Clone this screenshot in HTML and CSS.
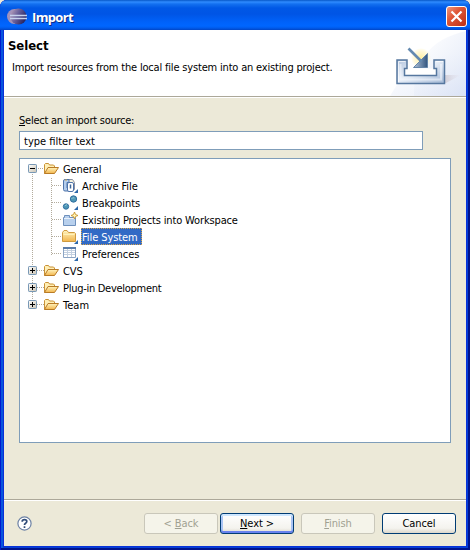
FILE: index.html
```html
<!DOCTYPE html>
<html lang="en">
<head>
<meta charset="utf-8">
<title>Import</title>
<link rel="stylesheet" href="styles.css">
</head>
<body>
<svg width="0" height="0" class="defs" aria-hidden="true">
  <defs>
    <linearGradient id="gold" x2="0" y2="1"><stop stop-color="#fff3bd"/><stop offset="1" stop-color="#f2b64d"/></linearGradient>
    <linearGradient id="box" x2="1" y2="1"><stop stop-color="#fff"/><stop offset="1" stop-color="#c9c2b1"/></linearGradient>
    <symbol id="folder" viewBox="0 0 16 16">
      <path d="M1.500 12.500V3.500l1-1h3l1 1.500h4l1 1V7" fill="#ffefb5" stroke="#c99135"/>
      <path d="M1.500 12.500L5 6.500h10.500L11.500 12.500z" fill="url(#gold)" stroke="#b97b26"/>
    </symbol>
    <symbol id="plus" viewBox="0 0 9 9"><rect x=".5" y=".5" width="8" height="8" rx=".7" fill="url(#box)" stroke="#7898b5"/><path d="M2 4.500h5M4.500 2v5" stroke="#000"/></symbol>
    <symbol id="minus" viewBox="0 0 9 9"><rect x=".5" y=".5" width="8" height="8" rx=".7" fill="url(#box)" stroke="#7898b5"/><path d="M2 4.500h5" stroke="#000"/></symbol>
  </defs>
</svg>
<div class="window">
  <div class="titlebar">
    <svg class="logo" width="20" height="17" viewBox="0 0 20 17">
      <defs><linearGradient id="orb" x2="1" y2=".5"><stop stop-color="#c0a6bd"/><stop offset=".5" stop-color="#69609b"/><stop offset="1" stop-color="#292662"/></linearGradient></defs>
      <circle cx="7.500" cy="8.500" r="7.500" fill="#a292bb"/><circle cx="11.500" cy="8.500" r="8" fill="url(#orb)"/>
      <path d="M3 7.500h17M3 10.500h17" stroke="#c8d2ed" stroke-width="1.300"/>
    </svg>
    <span class="title">Import</span>
    <svg class="close" width="21" height="21" viewBox="0 0 21 21">
      <defs><linearGradient id="red" x2="1" y2="1"><stop stop-color="#f09a80"/><stop offset=".4" stop-color="#df5737"/><stop offset="1" stop-color="#bd2d12"/></linearGradient></defs>
      <rect x=".5" y=".5" width="20" height="20" rx="2.500" fill="url(#red)" stroke="#fff"/><path d="M5.500 5.500l10 10M15.500 5.500l-10 10" stroke="#fff" stroke-width="2.200"/>
    </svg>
  </div>
  <div class="banner">
    <div class="heading">
      <h1><span>Select</span></h1>
      <p><span class="t-desc">Import resources from the local file system into an existing project.</span></p>
    </div>
    <svg class="art" width="76" height="66" viewBox="390 30 76 66">
      <defs>
        <linearGradient id="haze" x1="0" x2="1" y2="1"><stop offset=".1" stop-color="#fff"/><stop offset="1" stop-color="#d7e0f4"/></linearGradient>
        <linearGradient id="tray" x2="1" y2="1"><stop stop-color="#b4c5de"/><stop offset=".45" stop-color="#e9eff8"/><stop offset="1" stop-color="#a3b8d5"/></linearGradient>
        <linearGradient id="tip" x2="1" y2="0"><stop stop-color="#b4c5da"/><stop offset="1" stop-color="#31557f"/></linearGradient>
        <radialGradient id="glow"><stop stop-color="#fff0a0"/><stop offset=".5" stop-color="#fff6cc"/><stop offset="1" stop-color="#fff3b0" stop-opacity="0"/></radialGradient>
        <linearGradient id="shade" x2="1"><stop stop-color="#b5a8ae" stop-opacity=".6"/><stop offset="1" stop-color="#d7cbd5" stop-opacity="0"/></linearGradient>
      </defs>
      <path d="M414 96Q413 43 466 31V96z" fill="url(#haze)" opacity=".75"/>
      <path d="M390 96Q410 58 466 51V96z" fill="url(#haze)" opacity=".6"/>
      <path d="M445 75l16 0-15 8h-5z" fill="url(#shade)"/>
      <circle cx="421" cy="58" r="10" fill="url(#glow)"/>
      <path d="M404.500 68.500h32v7h-32z" fill="#fff"/>
      <path d="M397 60h10v8.500h-2.500v7h32v-7H434V60h10.500v23.500H397z" fill="url(#tray)" stroke="#56779f" stroke-width="1.500"/>
      <path d="M398.500 82V61.500h7M436 61.500h7" fill="none" stroke="#fff" opacity=".7"/>
      <path d="M400.500 64v15.500h40.500V64" fill="none" stroke="#f8faff" stroke-width="2" opacity=".55"/>
      <path d="M427.500 53.500v14h-14z" fill="url(#tip)" stroke="#6485a8"/>
      <path d="M408.500 48.500l13 13" stroke="#648ab0" stroke-width="2.600"/>
    </svg>
  </div>
  <div class="body">
    <label class="source"><span class="t-source"><u>S</u>elect an import source:</span></label>
    <div class="filter"><span class="t-filter">type filter text</span></div>
    <div class="tree">
      <svg class="guides" width="62" height="150" viewBox="20 159 62 150" aria-hidden="true">
        <path d="M32.500 174v126M51.500 178v77" stroke="#b2ab9c" stroke-dasharray="1 1"/>
        <path d="M38 168.500h6M37 270.500h7M37 287.500h7M37 304.500h7M52 185.500h9M52 202.500h9M52 219.500h9M52 236.500h9M52 253.500h9" stroke="#b2ab9c" stroke-dasharray="1 1"/>
      </svg>
      <div class="row"><svg class="toggle"><use href="#minus"/></svg><svg class="icon"><use href="#folder"/></svg><span class="name">General</span></div>
      <div class="row child">
        <svg class="icon" viewBox="0 0 16 16"><path d="M4.500 1.500h6l2 3v7h-8z" fill="#f4f1df" stroke="#8b91a0"/><path d="M1.500 3q0-1.500 1.500-1.500h4v3H5v5.500h2v3H3q-1.500 0-1.500-1.500z" fill="#b4cdec" stroke="#4f74aa"/><path d="M5.500 6q0-1.500 1.500-1.500h3q1.500 0 1.500 1.500v6q0 1.500-1.500 1.500H7q-1.500 0-1.500-1.500z" fill="#fff" stroke="#4e73aa"/><path d="M8.500 6.500v4" stroke="#416797" stroke-width="1.500"/><path d="M4 1v2" stroke="#d6aa4c"/><path d="M16 11v4h-4z" fill="#2e68aa"/></svg>
        <span class="name">Archive File</span></div>
      <div class="row child">
        <svg class="icon" viewBox="0 0 16 16"><circle cx="11.500" cy="4" r="3.200" fill="#4d96b5" stroke="#326fa0"/><circle cx="4" cy="11.500" r="2.700" fill="#4d96b5" stroke="#326fa0"/><path d="M9.500 4q1-2 3-1M3 11q1-2 2-1" stroke="#91c5d4" fill="none"/><path d="M16 11v4h-4z" fill="#2e68aa"/></svg>
        <span class="name">Breakpoints</span></div>
      <div class="row child">
        <svg class="icon" viewBox="0 0 16 16"><path d="M1.500 5.500h1v-2h5v2h6v8h-12z" fill="#b8d0ed" stroke="#6f91bd"/><path d="M2 6.500h11" stroke="#e8f1fb"/><path d="M12.500 0l1 2.500 2.500 1-2.500 1-1 2.500-1-2.500-2.500-1 2.500-1z" fill="#fff5b4" stroke="#c9942f" stroke-width=".9"/></svg>
        <span class="name t-exist">Existing Projects into Workspace</span></div>
      <div class="row child">
        <svg class="icon" viewBox="0 0 16 16"><path d="M.5 12.500v-9l1.500-2h3l1.500 2h6l1 1v8z" fill="url(#gold)" stroke="#d09b3e"/><path d="M1.500 5.500h11" stroke="#fff2b7"/><path d="M16 11v4h-4z" fill="#2e68aa"/></svg>
        <span class="name selected">File System</span></div>
      <div class="row child">
        <svg class="icon" viewBox="0 0 16 16"><path d="M1.500 1.500h12v10h-12z" fill="#fff" stroke="#8ca5c4"/><path d="M1 2h13" stroke="#5b7daa" stroke-width="2"/><path d="M2 4.500h11M2 6.500h11M2 8.500h11M5.500 3v8M9.500 3v8" stroke="#c3d0e0"/><path d="M16 11v4h-4z" fill="#2e68aa"/></svg>
        <span class="name">Preferences</span></div>
      <div class="row"><svg class="toggle"><use href="#plus"/></svg><svg class="icon"><use href="#folder"/></svg><span class="name">CVS</span></div>
      <div class="row"><svg class="toggle"><use href="#plus"/></svg><svg class="icon"><use href="#folder"/></svg><span class="name t-plug">Plug-in Development</span></div>
      <div class="row"><svg class="toggle"><use href="#plus"/></svg><svg class="icon"><use href="#folder"/></svg><span class="name t-team">Team</span></div>
    </div>
  </div>
  <div class="footer">
    <svg class="help" width="15" height="15" viewBox="0 0 15 15"><circle cx="7.500" cy="7.500" r="6.600" fill="#fff" stroke="#6d82a5" stroke-width="1.200"/><path d="M5.200 5.700q0-2 2.300-2t2.300 1.800q0 1-1.200 1.800t-1.100 1.700M7.500 10.300v1.800" fill="none" stroke="#304c78" stroke-width="1.700"/></svg>
    <button class="btn" disabled><span>&lt; <u>B</u>ack</span></button>
    <button class="btn primary"><span><u>N</u>ext &gt;</span></button>
    <button class="btn finish" disabled><span><u>F</u>inish</span></button>
    <button class="btn cancel"><span>Cancel</span></button>
  </div>
</div>
</body>
</html>
```
FILE: styles.css
```css
* { box-sizing: border-box; }
body {
  margin: 0;
  background: #ece9d8;
  font: 11px/13px "DejaVu Sans Condensed", "DejaVu Sans", sans-serif;
  font-stretch: condensed;
  color: #000;
}
.defs { position: absolute; }
svg { display: block; flex: none; }
span { white-space: nowrap; }
u { text-decoration: underline; text-decoration-thickness: 1px; text-underline-offset: 1px; }
.window {
  width: 470px;
  height: 550px;
  display: flex;
  flex-direction: column;
  padding: 0 4px 4px;
  border-radius: 7px 7px 0 0;
  background: #0831d9;
  box-shadow: inset 1px 0 #0019cf, inset -2px -2px #00138c, inset 3px 0 #0855dd, inset -3px -3px #0441d8;
}
.titlebar {
  height: 30px;
  margin: 0 -4px;
  padding: 0 7px;
  display: flex;
  align-items: center;
  flex: none;
  border-radius: 7px 7px 0 0;
  background: linear-gradient(#0758c8 0, #2f8bff 2px, #1370f0 4px, #0058e6 8px, #0055e5 14px, #0062fa 22px, #0066ff 26px, #005bec 28px, #0145c5 30px);
}
.logo { margin-top: 2px; }
.title {
  margin: 4px 0 0 5px;
  color: #fff;
  font: bold 13px/16px "Open Sans", sans-serif;
  letter-spacing: -.65px;
  text-shadow: 1px 1px #0c2b88;
}
.close { margin: 3px -4px 0 auto; }
.banner { height: 68px; display: flex; justify-content: space-between; flex: none; background: #fff; border-bottom: 1px solid #fff; box-shadow: inset 0 -1px #aca899; }
.heading { padding: 8px 0 0 4px; }
h1 { margin: 0; font-size: 13px; line-height: 16px; letter-spacing: -.05px; }
p { margin: 7px 0 0 4px; }
.t-desc { letter-spacing: -.18px; }
.body { flex: 1; padding: 16px 15px 0; background: #ece9d8; }
.source { display: block; height: 17px; }
.t-source { letter-spacing: -.25px; }
.filter { width: 404px; height: 19px; padding: 3px 4px; border: 1px solid #7f9db9; background: #fff; }
.t-filter { letter-spacing: 0; }
.tree { position: relative; width: 432px; height: 285px; margin-top: 8px; padding-top: 1px; border: 1px solid #7f9db9; background: #fff; }
.guides { position: absolute; left: 0; top: 0; }
.row { position: relative; display: flex; align-items: center; height: 17px; padding-left: 8px; }
.toggle { width: 9px; height: 9px; margin-right: 6px; }
.icon { width: 16px; height: 16px; }
.name { height: 17px; margin-left: 2px; padding: 3px 2px 1px; letter-spacing: -.08px; }
.child { padding-left: 42px; }
.child .name { margin-left: 3px; padding-left: 1px; }
.t-exist { letter-spacing: -.15px; }
.t-plug { letter-spacing: -.28px; }
.t-team { letter-spacing: .05px; }
.child .selected { padding-right: 4px; color: #fff; background: #316ac5; outline: 1px dotted #d7a34b; outline-offset: -1px; }
.footer { height: 47px; display: flex; align-items: center; flex: none; padding: 1px 10px 0 13px; border-top: 1px solid #aca899; box-shadow: inset 0 1px #fff; background: #ece9d8; }
.help { margin-right: 112px; }
.btn {
  width: 74px;
  height: 21px;
  margin: 0 2px 0 0;
  padding: 0;
  border: 1px solid #003c74;
  border-radius: 3px;
  background: linear-gradient(#fff, #f4f3ee 75%, #dcd7cb);
  color: #000;
  font: inherit;
  letter-spacing: -.1px;
}
.btn:disabled { border-color: #c9c7ba; background: #f5f4ea; color: #a1a192; }
.primary { box-shadow: inset 0 2px #cee7ff, inset 0 -2px #6982ee, inset 2px 0 #a9c4f4, inset -2px 0 #a9c4f4; }
.finish { margin-left: 5px; }
.cancel { margin: 0 0 0 5px; }
```
